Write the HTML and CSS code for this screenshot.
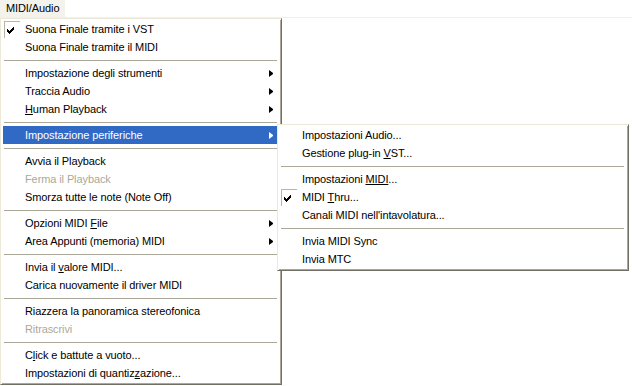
FILE: index.html
```html
<!DOCTYPE html>
<html lang="it">
<head>
  <meta charset="UTF-8"/>
  <title>MIDI/Audio</title>
  <link rel="stylesheet" href="styles.css">
</head>
<body>
<div class="menubar">
  <span class="menubar-item">MIDI/Audio</span>
</div>

<ul class="menu main-menu">
  <li class="item checked">
    <span class="check"><svg width="7" height="7" viewBox="0 0 7 7"><path d="M0 2h1v1h1v1h1v-1h1v-1h1v-1h1v-1h1v3h-1v1h-1v1h-1v1h-1v1h-1v-1h-1v-1h-1z"/></svg></span>
    Suona Finale tramite i VST
  </li>
  <li class="item">Suona Finale tramite il MIDI</li>
  <li class="sep"></li>
  <li class="item has-sub">Impostazione degli strumenti</li>
  <li class="item has-sub">Traccia Audio</li>
  <li class="item has-sub"><u>H</u>uman Playback</li>
  <li class="sep"></li>
  <li class="item has-sub active">
    Impostazione periferiche
    <ul class="menu submenu">
      <li class="item">Impostazioni Audio...</li>
      <li class="item">Gestione plug-in <u>V</u>ST...</li>
      <li class="sep"></li>
      <li class="item">Impostazioni <u>MIDI</u>...</li>
      <li class="item checked">
        <span class="check"><svg width="7" height="7" viewBox="0 0 7 7"><path d="M0 2h1v1h1v1h1v-1h1v-1h1v-1h1v-1h1v3h-1v1h-1v1h-1v1h-1v1h-1v-1h-1v-1h-1z"/></svg></span>
        MIDI <u>T</u>hru...
      </li>
      <li class="item">Canali MIDI nell'intavolatura...</li>
      <li class="sep"></li>
      <li class="item">Invia MIDI Sync</li>
      <li class="item">Invia MTC</li>
    </ul>
  </li>
  <li class="sep"></li>
  <li class="item">Avvia il Playback</li>
  <li class="item disabled">Ferma il Playback</li>
  <li class="item">Smorza tutte le note (Note Off)</li>
  <li class="sep"></li>
  <li class="item has-sub">Opzioni MIDI <u>F</u>ile</li>
  <li class="item has-sub">Area Appunti (memoria) MIDI</li>
  <li class="sep"></li>
  <li class="item">Invia il <u>v</u>alore MIDI...</li>
  <li class="item">Carica nuovamente il driver MIDI</li>
  <li class="sep"></li>
  <li class="item">Riazzera la panoramica stereofonica</li>
  <li class="item disabled">Ritrascrivi</li>
  <li class="sep"></li>
  <li class="item">C<u>l</u>ick e battute a vuoto...</li>
  <li class="item">Impostazioni di quantiz<u>z</u>azione...</li>
</ul>
</body>
</html>
```

FILE: styles.css
```css
body {
  margin: 0;
  font-family: "Liberation Sans", Arial, sans-serif;
  font-size: 11px;
  letter-spacing: -0.1px;
  color: #000;
  background-color: #fff;
}
.menubar {
  height: 17px;
  border-bottom: 1px solid #f0efe9;
  line-height: 17px;
}
.menubar-item {
  display: inline-block;
  padding: 0 6px;
  background-color: #f3f2ec;
}
.menu {
  list-style: none;
  margin: 0;
  padding: 1px 2px 2px;
  box-sizing: border-box;
  background-color: #fff;
  border: 1px solid;
  border-color: #ece9d8 #716f64 #716f64 #ece9d8;
  box-shadow: inset 1px 1px #fff, inset -1px -1px #aca899;
}
.main-menu {
  width: 282px;
}
.item {
  position: relative;
  height: 18px;
  line-height: 18px;
  padding-left: 22px;
  white-space: nowrap;
}
.item u {
  text-decoration: underline;
}
.disabled {
  color: #aca899;
}
.has-sub::after {
  content: "";
  position: absolute;
  right: 6px;
  top: 6px;
  height: 1px;
  border-left: 4px solid #000;
  border-top: 3px solid transparent;
  border-bottom: 3px solid transparent;
}
.active {
  background-color: #316ac5;
  color: #fff;
}
.active::after {
  border-left-color: #fff;
}
.sep {
  height: 0;
  margin: 4px 2px 3px 1px;
  border-top: 1px solid #aca899;
}
.check {
  position: absolute;
  left: 1px;
  top: 1px;
  width: 16px;
  height: 17px;
  box-sizing: border-box;
  border-top: 1px solid #b9b6a8;
  border-left: 1px solid #b9b6a8;
}
.check svg {
  position: absolute;
  left: 2px;
  top: 5px;
  fill: #000;
}
.submenu {
  position: absolute;
  left: calc(100% - 2px);
  top: -2px;
  width: 352px;
  color: #000;
}
```
